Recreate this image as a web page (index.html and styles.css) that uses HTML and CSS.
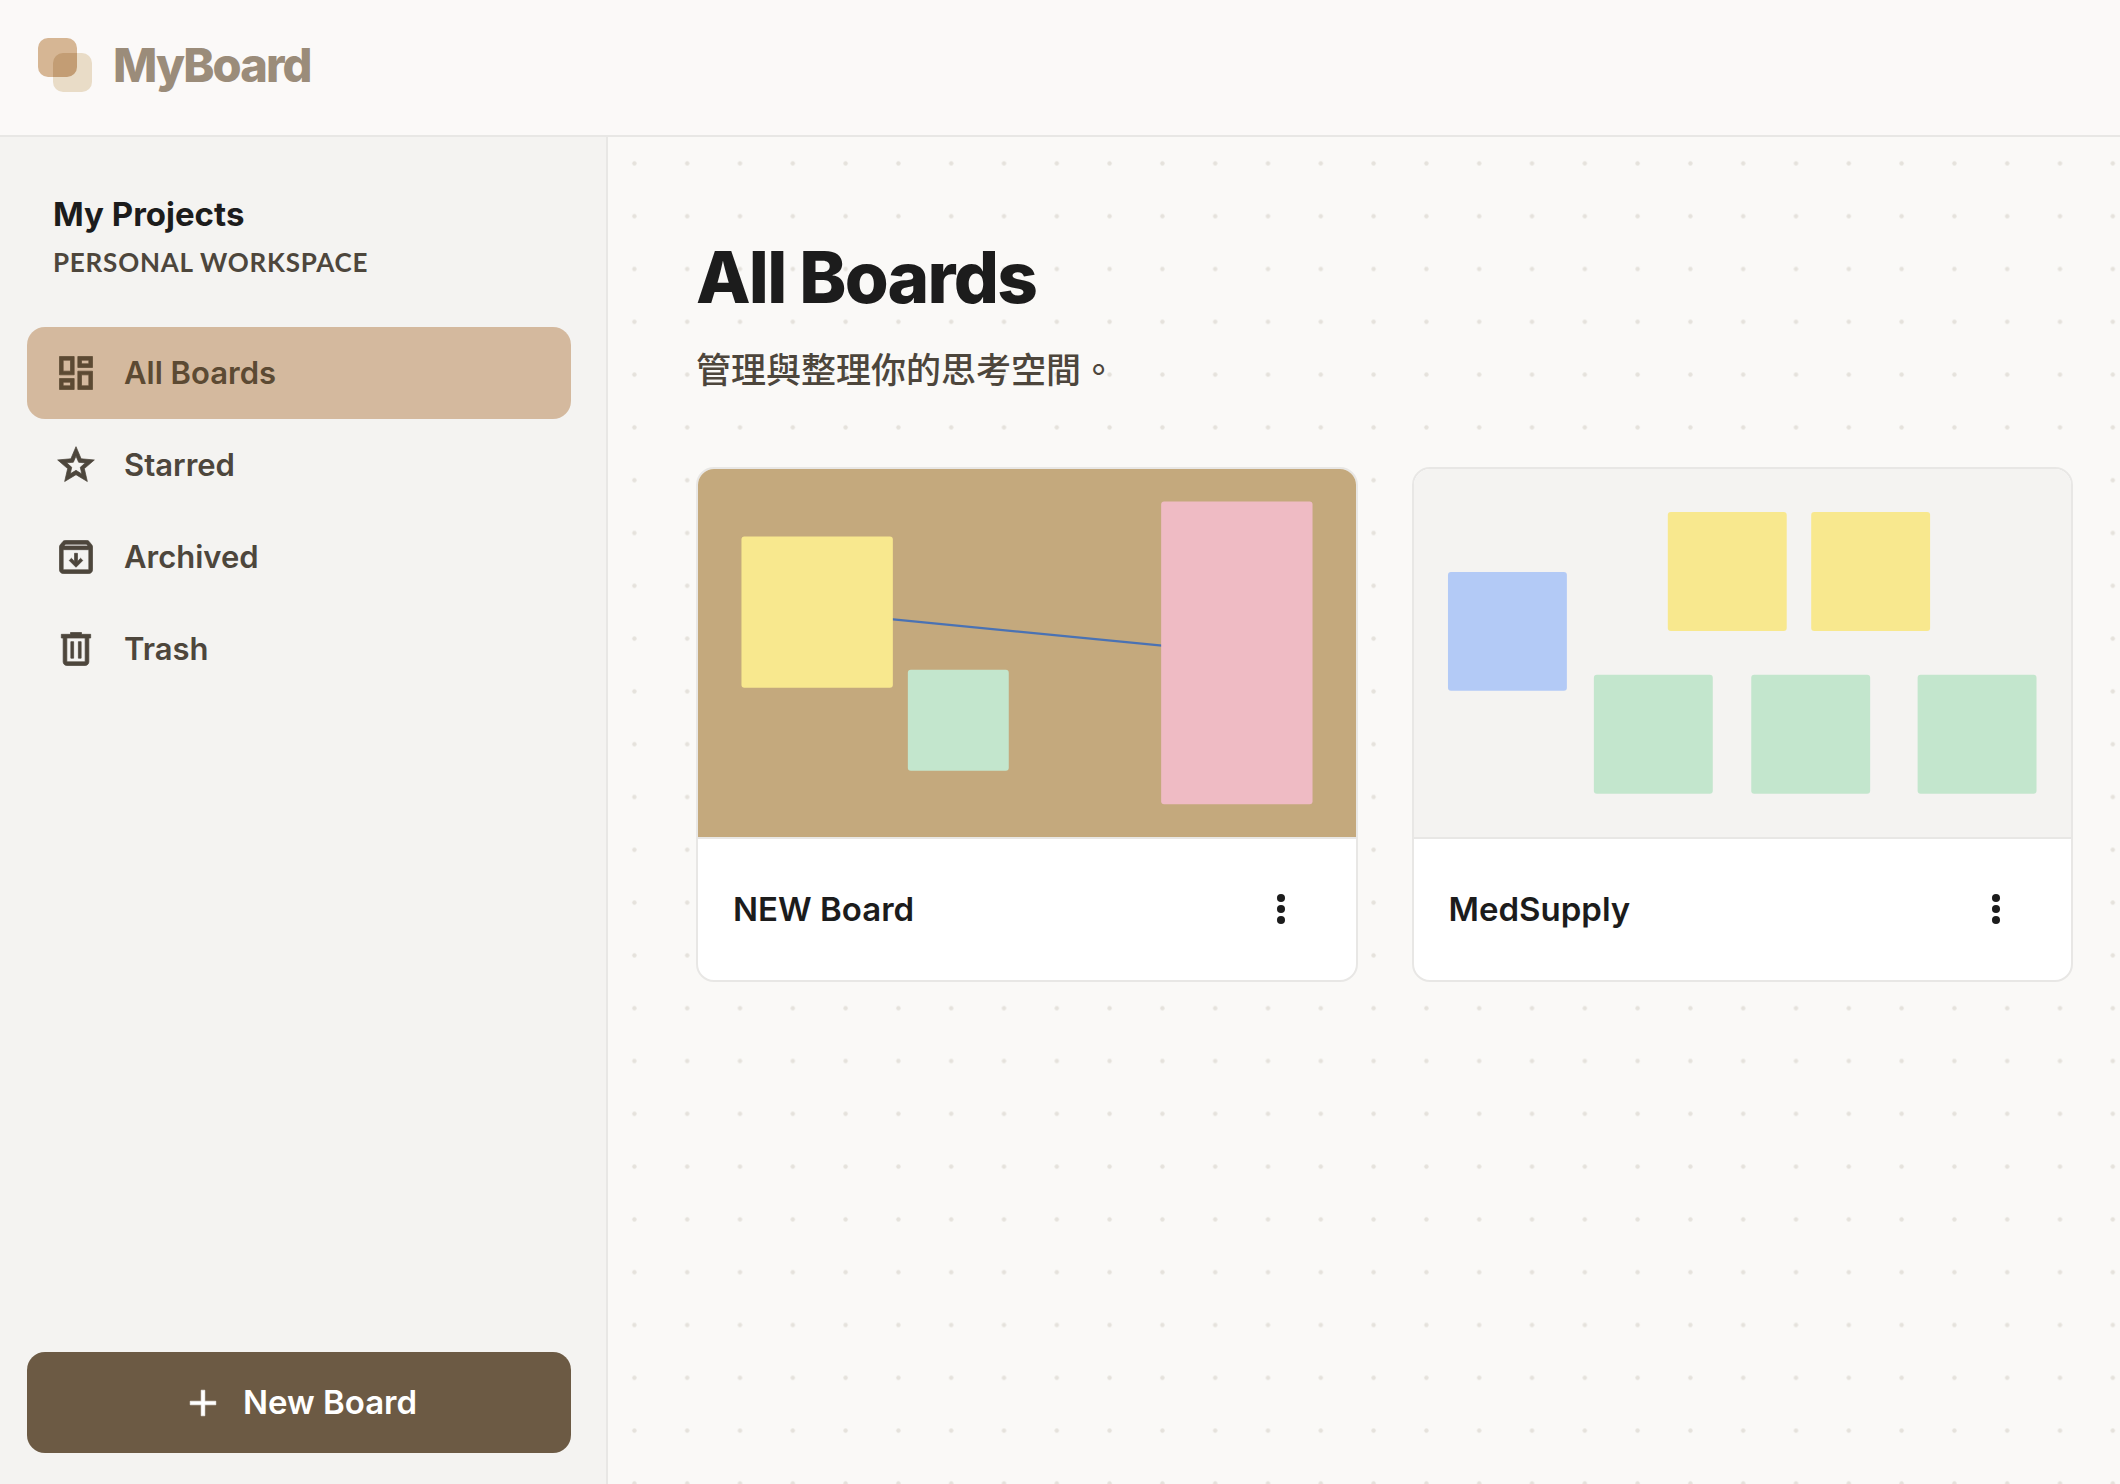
FILE: index.html
```html
<!DOCTYPE html>
<html lang="zh-Hant">
<head>
  <meta charset="UTF-8">
  <meta name="viewport" content="width=device-width, initial-scale=1.0">
  <title>MyBoard</title>
  <link rel="stylesheet" href="styles.css">
</head>
<body>
  <header class="topbar">
    <a href="#" class="brand">
      <svg class="brand-logo" viewBox="0 0 56 56" aria-hidden="true">
        <rect x="16" y="16" width="39" height="39" rx="10" fill="#e9dcc7"/>
        <rect class="brand-logo-top" x="1" y="1" width="39" height="39" rx="10" fill="#d6b694"/>
      </svg>
      <span>MyBoard</span>
    </a>
  </header>

  <div class="layout">
    <aside class="sidebar">
      <div class="workspace">
        <h2>My Projects</h2>
        <p>PERSONAL WORKSPACE</p>
      </div>
      <nav class="nav">
        <a href="#" class="nav-item active">
          <svg class="icon" viewBox="0 0 24 24" aria-hidden="true"><path d="M19 5v2h-4V5h4M9 5v6H5V5h4m10 8v6h-4v-6h4M9 17v2H5v-2h4M21 3h-8v6h8V3zM11 3H3v10h8V3zm10 8h-8v10h8V11zm-10 4H3v6h8v-6z"/></svg>
          All Boards
        </a>
        <a href="#starred" class="nav-item">
          <svg class="icon" viewBox="0 0 24 24" aria-hidden="true"><path d="M8.85 16.82 12 14.92l3.15 1.93-.82-3.6 2.77-2.4-3.65-.33L12 7.15l-1.45 3.35-3.65.32 2.77 2.43-.82 3.57zM5.82 21l1.63-7.03L2 9.25l7.2-.63L12 2l2.8 6.62 7.2.63-5.45 4.72L18.18 21 12 17.27 5.82 21z"/></svg>
          Starred
        </a>
        <a href="#archived" class="nav-item">
          <svg class="icon" viewBox="0 0 24 24" aria-hidden="true"><path d="m12 17.6 3.7-3.7-1.2-1.2-1.7 1.7V10h-1.6v4.4l-1.7-1.7-1.2 1.2 3.7 3.7zM5 8v11h14V8H5zm0 13c-.55 0-1.02-.2-1.41-.59C3.2 20.02 3 19.55 3 19V6.53a1.98 1.98 0 0 1 .43-1.23L4.68 3.78A1.8 1.8 0 0 1 5.3 3.2 1.8 1.8 0 0 1 6.1 3h11.8c.28 0 .55.06.8.19.25.12.45.32.62.59l1.25 1.52c.14.18.25.38.32.59.07.2.11.42.11.64V19c0 .55-.2 1.02-.59 1.41-.39.39-.86.59-1.41.59H5zm.4-15h13.2l-.85-1H6.25L5.4 6z"/></svg>
          Archived
        </a>
        <a href="#trash" class="nav-item">
          <svg class="icon" viewBox="0 0 24 24" aria-hidden="true"><path d="M7 21c-.55 0-1.02-.2-1.41-.59C5.2 20.02 5 19.55 5 19V6H4V4h5V3h6v1h5v2h-1v13c0 .55-.2 1.02-.59 1.41-.39.39-.86.59-1.41.59H7zM17 6H7v13h10V6zM9.2 17h1.5V8H9.2v9zm4.1 0h1.5V8h-1.5v9z"/></svg>
          Trash
        </a>
      </nav>
      <button type="button" class="new-board">
        <svg class="icon" viewBox="0 0 24 24" aria-hidden="true"><path d="M11 13H5v-2h6V5h2v6h6v2h-6v6h-2v-6z"/></svg>
        New Board
      </button>
    </aside>

    <main class="content">
      <h1>All Boards</h1>
      <p class="lead">管理與整理你的思考空間。</p>

      <div class="board-grid">
        <article class="board-card">
          <svg class="preview cork" viewBox="0 0 658 368" aria-hidden="true">
            <line x1="119" y1="143" x2="539" y2="184" stroke="#4a72b4" stroke-width="2.2"/>
            <rect x="43.5" y="67.5" width="151.5" height="151.5" rx="3" fill="#f8e88e"/>
            <rect x="210" y="201" width="101" height="101" rx="3" fill="#c3e6cd"/>
            <rect x="463.5" y="32.5" width="151.5" height="303" rx="3" fill="#efbbc4"/>
          </svg>
          <div class="board-footer">
            <h3>NEW Board</h3>
            <button type="button" class="menu-btn" aria-label="NEW Board menu">
              <svg class="icon" viewBox="0 0 24 24" aria-hidden="true"><circle cx="12" cy="6" r="2.2"/><circle cx="12" cy="12" r="2.2"/><circle cx="12" cy="18" r="2.2"/></svg>
            </button>
          </div>
        </article>

        <article class="board-card">
          <svg class="preview" viewBox="0 0 658 368" aria-hidden="true">
            <rect x="34" y="103" width="119" height="119" rx="3" fill="#b3caf6"/>
            <rect x="254" y="43" width="119" height="119" rx="3" fill="#f8e88e"/>
            <rect x="397.5" y="43" width="119" height="119" rx="3" fill="#f8e88e"/>
            <rect x="180" y="206" width="119" height="119" rx="3" fill="#c3e6cd"/>
            <rect x="337.5" y="206" width="119" height="119" rx="3" fill="#c3e6cd"/>
            <rect x="504" y="206" width="119" height="119" rx="3" fill="#c3e6cd"/>
          </svg>
          <div class="board-footer">
            <h3>MedSupply</h3>
            <button type="button" class="menu-btn" aria-label="MedSupply menu">
              <svg class="icon" viewBox="0 0 24 24" aria-hidden="true"><circle cx="12" cy="6" r="2.2"/><circle cx="12" cy="12" r="2.2"/><circle cx="12" cy="18" r="2.2"/></svg>
            </button>
          </div>
        </article>
      </div>
    </main>
  </div>
</body>
</html>
```
FILE: styles.css
```css
* {
  box-sizing: border-box;
}
body {
  margin: 0;
  min-height: 100vh;
  display: flex;
  flex-direction: column;
  font-family: Inter, "Noto Sans CJK TC", sans-serif;
  background: #faf9f7;
  color: #1c1c1c;
}
h1, h2, h3, p {
  margin: 0;
}
a {
  color: inherit;
  text-decoration: none;
}
button {
  font: inherit;
  border: none;
  cursor: pointer;
}
.icon {
  width: 44px;
  height: 44px;
  flex: none;
  fill: currentColor;
}

/* header */
.topbar {
  display: flex;
  align-items: center;
  padding: 34px 37px;
  border-bottom: 2px solid #e8e7e5;
  background: #fbf9f8;
}
.brand {
  display: flex;
  align-items: center;
  gap: 20px;
  font-size: 47px;
  line-height: 62px;
  font-weight: 800;
  letter-spacing: -0.04em;
  color: #9b8c7a;
  padding-bottom: 5px;
}
.brand-logo {
  width: 56px;
  height: 56px;
  isolation: isolate;
}
.brand-logo-top {
  mix-blend-mode: multiply;
}

.layout {
  flex: 1;
  display: flex;
}

/* sidebar */
.sidebar {
  width: 608px;
  flex: none;
  display: flex;
  flex-direction: column;
  padding: 52px 35px 31px 27px;
  background: #f4f3f1;
  border-right: 2px solid #e8e7e5;
}
.workspace {
  padding: 0 26px;
  margin-bottom: 42px;
}
.workspace h2 {
  font-size: 33px;
  line-height: 50px;
  font-weight: 700;
}
.workspace p {
  font-family: Lato, sans-serif;
  font-size: 26px;
  line-height: 46px;
  font-weight: 700;
  letter-spacing: 0.03em;
  color: #4d463c;
}
.nav {
  flex: 1;
}
.nav-item {
  display: flex;
  align-items: center;
  gap: 26px;
  padding: 24px 27px;
  border-radius: 18px;
  font-size: 31px;
  line-height: 44px;
  font-weight: 600;
  color: #4d463c;
}
.nav-item .icon {
  stroke: currentColor;
  stroke-width: 0.4px;
}
.nav-item.active {
  background: #d4b99e;
  color: #5c4a33;
}
.new-board {
  display: flex;
  align-items: center;
  justify-content: center;
  gap: 18px;
  padding: 28px;
  border-radius: 18px;
  background: #6c5a44;
  color: #fff;
  font-size: 33px;
  line-height: 45px;
  font-weight: 600;
}
.new-board .icon {
  stroke: currentColor;
  stroke-width: 0.3px;
}

/* boards */
.content {
  flex: 1;
  min-width: 0;
  padding: 92px 47px 88px 88px;
  /* 5 x 5 dots per tile */
  background: url("data:image/svg+xml,%3Csvg xmlns='http://www.w3.org/2000/svg' viewBox='0 0 120 120'%3E%3Cpattern id='d' width='24' height='24' patternUnits='userSpaceOnUse'%3E%3Ccircle cx='12' cy='12' r='1' fill='%23e5e2dc'/%3E%3C/pattern%3E%3Crect width='120' height='120' fill='url(%23d)'/%3E%3C/svg%3E") 0 0 / 264px 264px;
}
.content h1 {
  font-size: 71px;
  line-height: 96px;
  font-weight: 800;
  letter-spacing: -0.025em;
}
.lead {
  margin-top: 18px;
  font-size: 35px;
  line-height: 54px;
  font-weight: 500;
  color: #4d463c;
}
.board-grid {
  display: grid;
  grid-template-columns: repeat(2, 1fr);
  gap: 54px;
  margin-top: 70px;
}
.board-card {
  overflow: hidden;
  background: #fff;
  border: 2px solid #e8e7e5;
  border-radius: 18px;
}
.preview {
  display: block;
  width: 100%;
  background: #f4f3f1;
}
.preview.cork {
  background: #c4a97d;
}
.board-footer {
  display: flex;
  align-items: center;
  justify-content: space-between;
  padding: 30px 35px 31px;
  border-top: 2px solid #e8e7e5;
}
.board-footer h3 {
  font-size: 33px;
  line-height: 50px;
  font-weight: 600;
}
.menu-btn {
  display: flex;
  padding: 18px;
  border-radius: 18px;
  background: none;
  color: #1c1c1c;
}
```
